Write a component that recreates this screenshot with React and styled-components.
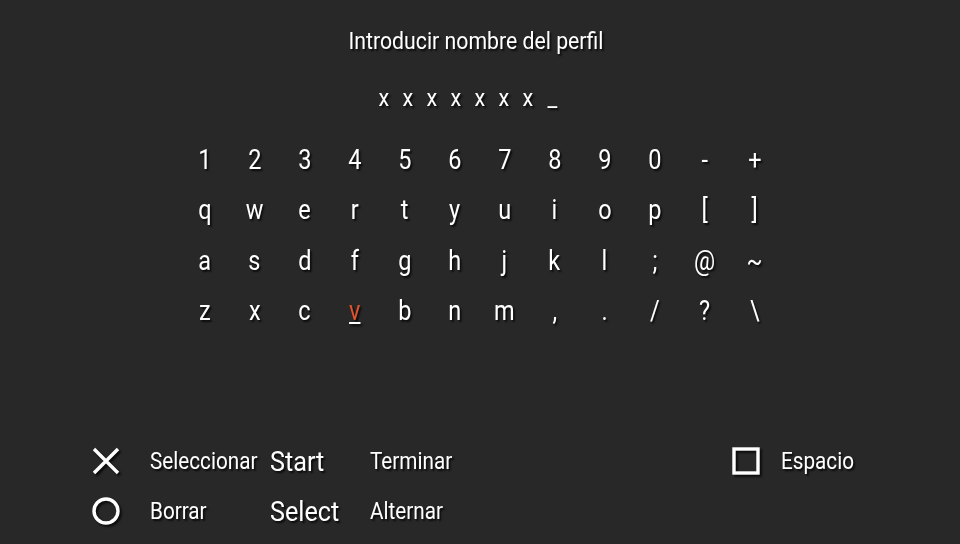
import React from 'react';
import styled, { createGlobalStyle } from 'styled-components';

const GlobalStyle = createGlobalStyle`
    html, body {
        margin: 0;
        padding: 0;
        background: #282828;
    }
    body {
        font-family: Roboto, "Liberation Sans", sans-serif;
        color: #fff;
    }
`;

const Screen = styled.div`
    width: 960px;
    height: 544px;
    overflow: hidden;
    display: flex;
    flex-direction: column;
    background: #282828;
    text-shadow: 2px 2px 2px rgba(0, 0, 0, 0.75);
`;

const Squeezed = styled.span`
    display: inline-block;
    white-space: nowrap;
    font-size: ${p => p.$size}px;
    line-height: 30px;
    transform: scaleX(${p => p.$squeeze || 0.9});
    transform-origin: ${p => p.$origin || 'left'} center;
`;

const Title = styled.div`
    height: 30px;
    margin-top: 26px;
    margin-right: 7px;
    text-align: center;
`;

const NameRow = styled.div`
    display: flex;
    justify-content: center;
    height: 30px;
    margin-top: 27px;
    margin-right: 24px;
`;

const NameCell = styled.div`
    width: 24px;
    text-align: center;
`;

const Keyboard = styled.div`
    display: grid;
    grid-template-columns: repeat(12, 50px);
    grid-auto-rows: 50.3px;
    width: 600px;
    margin: 22px 0 0 179.5px;
`;

const Key = styled.div`
    display: flex;
    align-items: center;
    justify-content: center;
    color: ${p => (p.$active ? '#e0532c' : '#fff')};
    text-decoration: ${p => (p.$active ? 'underline' : 'none')};
    text-decoration-color: #fff;
    text-decoration-thickness: 2px;
    text-underline-offset: 2px;
`;

const Footer = styled.div`
    display: grid;
    grid-template-columns: 69px 120px 100px 351px 60px auto;
    grid-auto-rows: 50px;
    align-items: center;
    margin: 100.8px 0 0 81px;
`;

const IconCell = styled.div`
    display: flex;
    align-items: center;
    justify-content: center;
    width: 50px;
    height: 50px;
`;

const Icon = styled.svg`
    width: 32px;
    height: 32px;
    margin-bottom: 2px;
    fill: none;
    stroke: #fff;
    stroke-width: 3.4;
    filter: drop-shadow(2px 2px 1px rgba(0, 0, 0, 0.75));
`;

const rows = [
    ['1', '2', '3', '4', '5', '6', '7', '8', '9', '0', '-', '+'],
    ['q', 'w', 'e', 'r', 't', 'y', 'u', 'i', 'o', 'p', '[', ']'],
    ['a', 's', 'd', 'f', 'g', 'h', 'j', 'k', 'l', ';', '@', '~'],
    ['z', 'x', 'c', 'v', 'b', 'n', 'm', ',', '.', '/', '?', '\\'],
];

const name = ['x', 'x', 'x', 'x', 'x', 'x', 'x', '_'];

function App() {
    return (
        <>
            <GlobalStyle />
            <Screen>
                <Title>
                    <Squeezed $size={24} $squeeze={0.885} $origin="center">Introducir nombre del perfil</Squeezed>
                </Title>
                <NameRow>
                    {name.map((c, i) => (
                        <NameCell key={i}>
                            <Squeezed $size={24} $origin="center">{c}</Squeezed>
                        </NameCell>
                    ))}
                </NameRow>
                <Keyboard>
                    {rows.flat().map(c => (
                        <Key key={c} $active={c === 'v'}>
                            <Squeezed $size={28} $squeeze={0.84} $origin="center">{c}</Squeezed>
                        </Key>
                    ))}
                </Keyboard>
                <Footer>
                    <IconCell>
                        <Icon viewBox="0 0 32 32"><path d="M4 4 L28 28 M28 4 L4 28" /></Icon>
                    </IconCell>
                    <Squeezed $size={23}>Seleccionar</Squeezed>
                    <Squeezed $size={28}>Start</Squeezed>
                    <Squeezed $size={23}>Terminar</Squeezed>
                    <IconCell>
                        <Icon viewBox="0 0 32 32"><rect x="4" y="4" width="24" height="24" /></Icon>
                    </IconCell>
                    <Squeezed $size={23}>Espacio</Squeezed>
                    <IconCell>
                        <Icon viewBox="0 0 32 32"><circle cx="16" cy="16" r="12" /></Icon>
                    </IconCell>
                    <Squeezed $size={23}>Borrar</Squeezed>
                    <Squeezed $size={28}>Select</Squeezed>
                    <Squeezed $size={23}>Alternar</Squeezed>
                </Footer>
            </Screen>
        </>
    );
}

export default App;
